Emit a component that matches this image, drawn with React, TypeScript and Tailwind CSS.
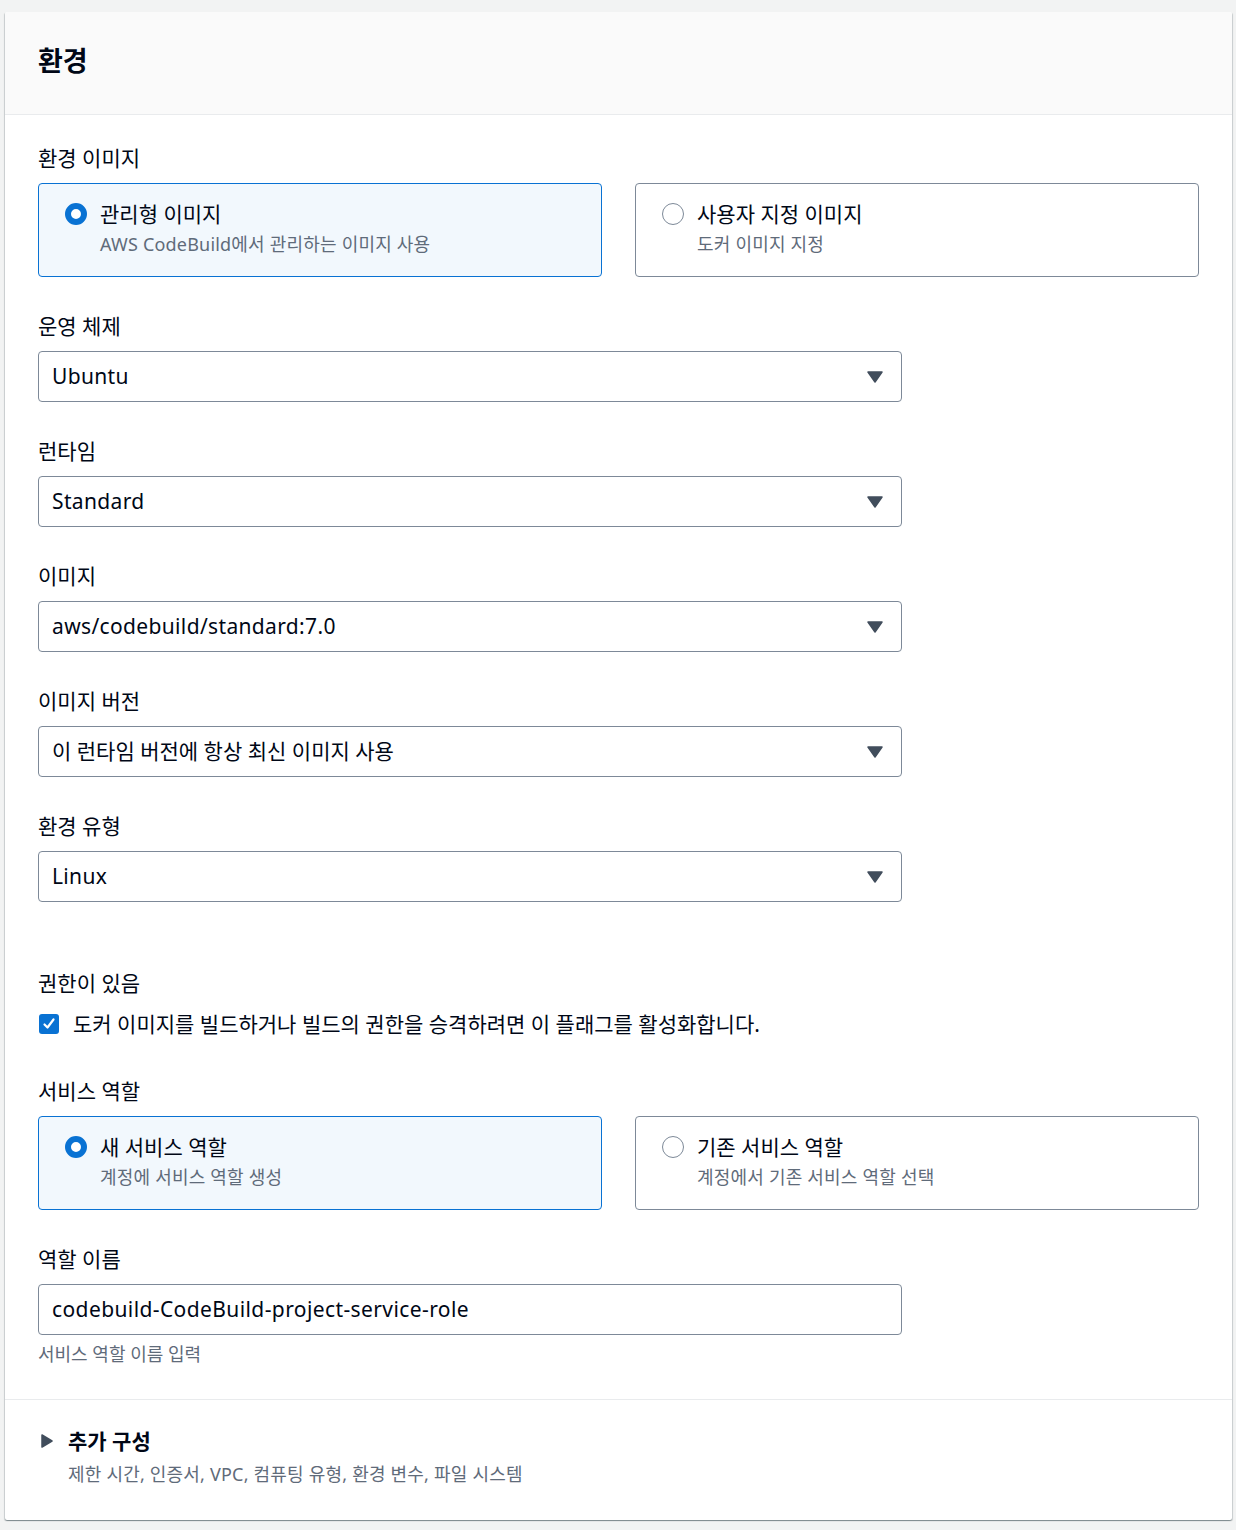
import React from "react";

const font = { fontFamily: '"Noto Sans", "Noto Sans CJK KR", sans-serif' };

function Caret() {
  return (
    <svg width="16" height="12" viewBox="0 0 16 12" className="shrink-0">
      <path d="M1 1 H15 L8 11 Z" fill="#414d5c" stroke="#414d5c" strokeWidth="1.5" strokeLinejoin="round" />
    </svg>
  );
}

function Radio({ checked }: { checked: boolean }) {
  return checked ? (
    <span className="mt-[4px] block h-[22px] w-[22px] shrink-0 rounded-full border-[6px] border-[#0972d3] bg-white" />
  ) : (
    <span className="mt-[4px] block h-[22px] w-[22px] shrink-0 rounded-full border-[1.5px] border-[#7d8998] bg-white" />
  );
}

function Tile({ checked, title, desc }: { checked: boolean; title: string; desc: string }) {
  return (
    <div
      className={
        checked
          ? "h-[94px] rounded-[4px] border border-[#0972d3] bg-[#f2f8fd] pl-[26px] pt-[15px]"
          : "h-[94px] rounded-[4px] border border-[#7d8998] bg-white pl-[26px] pt-[15px]"
      }
    >
      <div className="flex gap-[13px]">
        <Radio checked={checked} />
        <div>
          <div className="text-[21px] leading-[30px] text-[#000716]">{title}</div>
          <div className="mt-[1px] text-[18px] leading-[28px] tracking-[0.2px] text-[#5f6b7a]">{desc}</div>
        </div>
      </div>
    </div>
  );
}

function Label({ children }: { children: React.ReactNode }) {
  return <div className="mb-[10px] text-[21px] leading-[30px] text-[#000716]">{children}</div>;
}

function Select({ value, latin }: { value: string; latin?: boolean }) {
  return (
    <div className="flex h-[51px] w-[864px] items-center justify-between rounded-[4px] border border-[#7d8998] bg-white pl-[13px] pr-[18px]">
      <span className={latin ? "text-[21px] tracking-[0.35px] text-[#000716]" : "text-[21px] text-[#000716]"}>{value}</span>
      <Caret />
    </div>
  );
}

export default function App() {
  return (
    <div className="min-h-[1530px] bg-[#f2f3f3] pl-[5px] pr-[4px] pt-[12px]" style={font}>
      <div className="rounded-[2px] bg-white shadow-[0_1px_1px_0_rgba(0,28,36,0.3),1px_1px_1px_0_rgba(0,28,36,0.15),-1px_1px_1px_0_rgba(0,28,36,0.15)]">
        <div className="h-[103px] rounded-t-[2px] border-b border-[#e9ebed] bg-[#fafafa] pl-[33px] pt-[34px]">
          <h2 className="text-[27px] font-bold leading-[30px] text-[#000716]">환경</h2>
        </div>
        <div className="px-[33px] pb-[33px] pt-[28px]">
          <Label>환경 이미지</Label>
          <div className="grid grid-cols-2 gap-[33px]">
            <Tile checked title="관리형 이미지" desc="AWS CodeBuild에서 관리하는 이미지 사용" />
            <Tile checked={false} title="사용자 지정 이미지" desc="도커 이미지 지정" />
          </div>

          <div className="mt-[34px]">
            <Label>운영 체제</Label>
            <Select value="Ubuntu" latin />
          </div>
          <div className="mt-[34px]">
            <Label>런타임</Label>
            <Select value="Standard" latin />
          </div>
          <div className="mt-[34px]">
            <Label>이미지</Label>
            <Select value="aws/codebuild/standard:7.0" latin />
          </div>
          <div className="mt-[34px]">
            <Label>이미지 버전</Label>
            <Select value="이 런타임 버전에 항상 최신 이미지 사용" />
          </div>
          <div className="mt-[34px]">
            <Label>환경 유형</Label>
            <Select value="Linux" latin />
          </div>

          <div className="mt-[66px]">
            <div className="text-[21px] leading-[30px] text-[#000716]">권한이 있음</div>
            <div className="mt-[11px] flex items-center gap-[14px]">
              <span className="ml-[1px] flex h-[20px] w-[20px] items-center justify-center rounded-[3px] bg-[#0972d3]">
                <svg width="14" height="14" viewBox="0 0 14 14">
                  <path d="M2.5 7.5 L5.5 10.5 L11.5 2.5" fill="none" stroke="white" strokeWidth="2.2" strokeLinecap="round" strokeLinejoin="round" />
                </svg>
              </span>
              <span className="text-[21px] leading-[30px] text-[#000716]">
                도커 이미지를 빌드하거나 빌드의 권한을 승격하려면 이 플래그를 활성화합니다.
              </span>
            </div>
          </div>

          <div className="mt-[37px]">
            <Label>서비스 역할</Label>
            <div className="grid grid-cols-2 gap-[33px]">
              <Tile checked title="새 서비스 역할" desc="계정에 서비스 역할 생성" />
              <Tile checked={false} title="기존 서비스 역할" desc="계정에서 기존 서비스 역할 선택" />
            </div>
          </div>

          <div className="mt-[34px]">
            <Label>역할 이름</Label>
            <div className="flex h-[51px] w-[864px] items-center rounded-[4px] border border-[#7d8998] bg-white pl-[13px]">
              <span className="text-[21px] tracking-[0.4px] text-[#000716]">codebuild-CodeBuild-project-service-role</span>
            </div>
            <div className="mt-[7px] text-[18px] leading-[24px] text-[#5f6b7a]">서비스 역할 이름 입력</div>
          </div>
        </div>
        <div className="border-t border-[#e9ebed] pb-[32px] pl-[33px] pt-[26px]">
          <div className="flex items-center gap-[14px]">
            <svg width="14" height="16" viewBox="0 0 14 16" className="ml-[2px]">
              <path d="M2 2 L12 8 L2 14 Z" fill="#414d5c" stroke="#414d5c" strokeWidth="1.5" strokeLinejoin="round" />
            </svg>
            <span className="text-[21px] font-bold leading-[30px] text-[#000716]">추가 구성</span>
          </div>
          <div className="ml-[30px] mt-[4px] text-[18px] leading-[28px] tracking-[0.2px] text-[#5f6b7a]">
            제한 시간, 인증서, VPC, 컴퓨팅 유형, 환경 변수, 파일 시스템
          </div>
        </div>
      </div>
    </div>
  );
}
